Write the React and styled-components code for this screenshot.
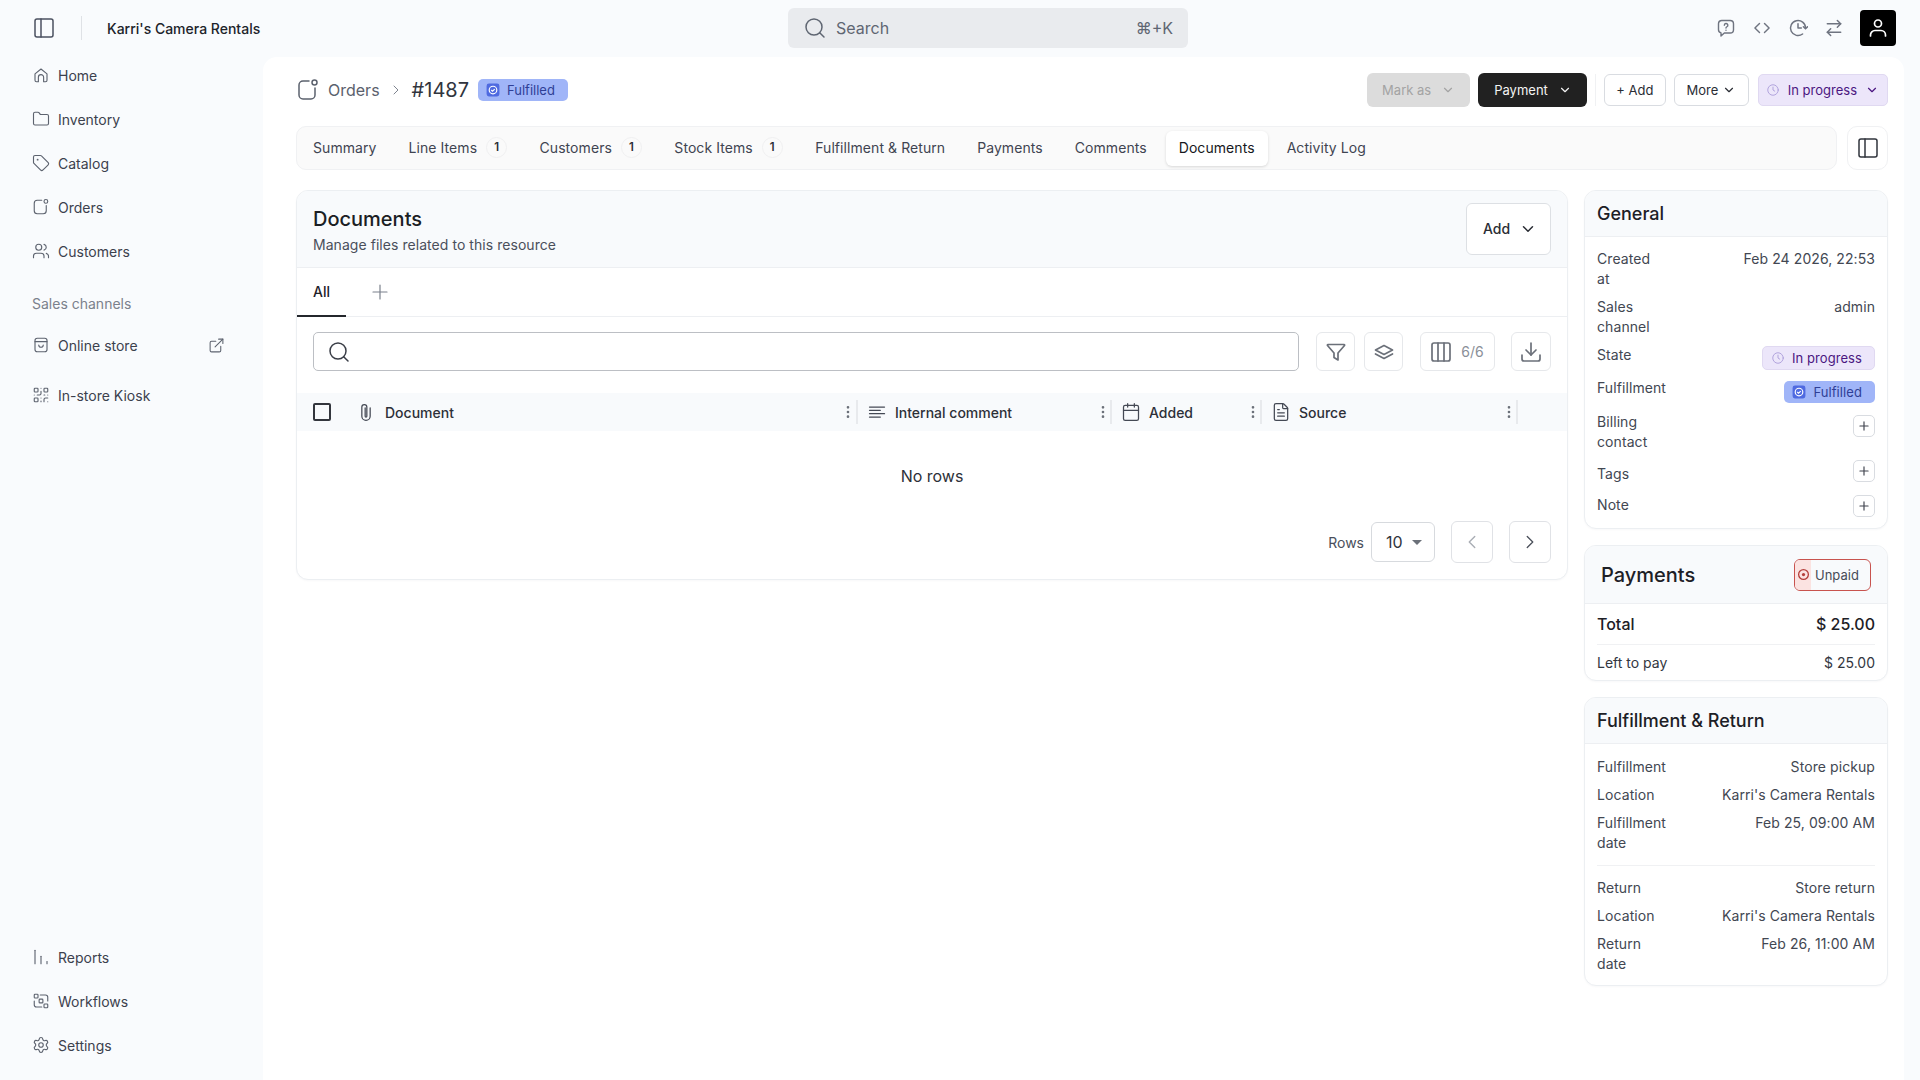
import React from "react";
import styled, { createGlobalStyle } from "styled-components";
import {
  ArrowRightLeft,
  Calendar,
  ChevronDown,
  ChevronLeft,
  ChevronRight,
  Columns3,
  Download,
  EllipsisVertical,
  ExternalLink,
  FileText,
  Folder,
  PanelLeft,
  Plus,
  QrCode,
  Search,
  Settings,
  Tag,
  Users,
} from "lucide-react";

const GlobalStyle = createGlobalStyle`
  html, body {
    margin: 0;
    height: 100%;
    background: #f9fbfd;
  }
  body {
    font-family: Inter, "Liberation Sans", sans-serif;
    color: #1d2026;
    overflow: hidden;
  }
  * {
    box-sizing: border-box;
  }
`;

const Svg = ({ size = 16, children, color = "currentColor", sw = 1.5 }) => (
  <svg
    width={size}
    height={size}
    viewBox="0 0 24 24"
    fill="none"
    stroke={color}
    strokeWidth={sw}
    strokeLinecap="round"
    strokeLinejoin="round"
  >
    {children}
  </svg>
);

const HomeIcon = ({ size }) => (
  <Svg size={size}>
    <path d="M4 10.5L12 4l8 6.5V19a2 2 0 0 1-2 2h-2.5v-6a3.5 3.5 0 0 0-7 0v6H6a2 2 0 0 1-2-2z" />
  </Svg>
);

const OrdersIcon = ({ size }) => (
  <Svg size={size}>
    <path d="M13 3H7a4 4 0 0 0-4 4v10a4 4 0 0 0 4 4h8a4 4 0 0 0 4-4V10" />
    <circle cx="18.5" cy="4.5" r="2.5" />
  </Svg>
);

const StoreIcon = ({ size }) => (
  <Svg size={size}>
    <rect x="4" y="3" width="16" height="18" rx="3" />
    <path d="M4 7.5h16" />
    <path d="M9 12a3 3 0 0 0 6 0" />
  </Svg>
);

const ReportsIcon = ({ size }) => (
  <Svg size={size}>
    <path d="M4 3v18" />
    <path d="M12 11v10" />
    <path d="M20 18v3" />
  </Svg>
);

const WorkflowIcon = ({ size }) => (
  <Svg size={size}>
    <rect x="3" y="3" width="5" height="5" rx="1" />
    <rect x="9.5" y="9.5" width="5" height="5" rx="1" />
    <rect x="16" y="16" width="5" height="5" rx="1" />
    <path d="M11 4h7a3 3 0 0 1 3 3v5" />
    <path d="M3 12v5a3 3 0 0 0 3 3h7" />
  </Svg>
);

const HelpIcon = ({ size }) => (
  <Svg size={size} sw={1.7}>
    <path d="M7 3h10a4 4 0 0 1 4 4v7a4 4 0 0 1-4 4h-7l-4 3.5V17.8A4 4 0 0 1 3 14V7a4 4 0 0 1 4-4z" />
    <path d="M10 8.6a2.1 2.1 0 1 1 3.1 1.9c-.7.4-1.1.8-1.1 1.4" />
    <path d="M12 14.6h.01" />
  </Svg>
);

const CodeIcon = ({ size }) => (
  <Svg size={size} sw={1.7}>
    <path d="M9 6.5L3.5 12 9 17.5" />
    <path d="M15 6.5l5.5 5.5-5.5 5.5" />
  </Svg>
);

const HistoryIcon = ({ size }) => (
  <Svg size={size} sw={1.8}>
    <path d="M17.5 19.2A9 9 0 1 1 21 12" />
    <path d="M12 7v5h4" />
    <path d="M18.5 10.5l2.5 2.5 2.5-2.5" />
  </Svg>
);

const UserIcon = ({ size }) => (
  <Svg size={size} sw={1.7}>
    <circle cx="12" cy="7.5" r="3.5" />
    <path d="M4.5 20v-1a4.5 4.5 0 0 1 4.5-4.5h6a4.5 4.5 0 0 1 4.5 4.5v1" />
  </Svg>
);

const FunnelIcon = ({ size }) => (
  <Svg size={size} sw={1.7}>
    <path d="M4 4.5h16a.6.6 0 0 1 .5 1L14 13v7l-4-2.5V13L3.5 5.5a.6.6 0 0 1 .5-1z" />
  </Svg>
);

const LayersIcon = ({ size }) => (
  <Svg size={size} sw={1.7}>
    <path d="M12 5.5l8.5 4.5-8.5 4.5L3.5 10z" />
    <path d="M3.5 14l8.5 4.5 8.5-4.5" />
  </Svg>
);

const ClipIcon = ({ size }) => (
  <Svg size={size}>
    <path d="M17 7v10a5 5 0 0 1-10 0V6a3 3 0 0 1 6 0v11a1 1 0 0 1-2 0V7" />
  </Svg>
);

const LinesIcon = ({ size }) => (
  <Svg size={size}>
    <path d="M3 6h18" />
    <path d="M3 10h13" />
    <path d="M3 14h18" />
    <path d="M3 18h13" />
  </Svg>
);

const ClockIcon = ({ size }) => (
  <Svg size={size} color="#a99ad8">
    <circle cx="12" cy="12" r="9" />
    <path d="M12 7v5l3 2" />
  </Svg>
);

const FulfilledIcon = () => (
  <svg width="14" height="14" viewBox="0 0 24 24" fill="none">
    <rect x="1" y="1" width="22" height="22" rx="4" fill="#4f6ae0" />
    <circle cx="12" cy="12" r="6.5" stroke="#fff" strokeWidth="2" />
    <path d="M9 12l2.2 2.2L15 10.5" stroke="#fff" strokeWidth="2" />
  </svg>
);

const UnpaidIcon = () => (
  <svg width="13" height="13" viewBox="0 0 24 24" fill="none">
    <circle cx="12" cy="12" r="9" stroke="#b5403c" strokeWidth="2.4" />
    <circle cx="12" cy="12" r="3" fill="#b5403c" />
  </svg>
);

const Page = styled.div`
  width: 1920px;
  height: 1080px;
  display: flex;
  flex-direction: column;
`;

const TopBar = styled.header`
  height: 57px;
  flex: none;
  display: flex;
  align-items: center;
  padding-bottom: 1px;
`;

const TopLeft = styled.div`
  width: 788px;
  display: flex;
  align-items: center;
  padding-left: 32px;
  color: #4b5160;
`;

const TopDivider = styled.span`
  width: 1px;
  height: 24px;
  background: #dfe2e6;
  margin: 0 25px;
`;

const ShopName = styled.span`
  font-size: 14px;
  font-weight: 500;
  color: #20232a;
`;

const SearchBox = styled.div`
  width: 400px;
  height: 40px;
  border-radius: 6px;
  background: #e9ebee;
  display: flex;
  align-items: center;
  gap: 9px;
  padding: 0 15px;
  color: #5f6672;
  font-size: 16px;
`;

const Shortcut = styled.span`
  margin-left: auto;
  font-size: 16px;
`;

const TopRight = styled.div`
  flex: 1;
  display: flex;
  align-items: center;
  justify-content: flex-end;
  padding-right: 24px;
  color: #6f7480;
`;

const TopIcon = styled.span`
  width: 36px;
  display: flex;
  justify-content: center;
`;

const Avatar = styled.div`
  width: 36px;
  height: 36px;
  margin-left: 8px;
  border-radius: 4px;
  background: #000;
  color: #fff;
  display: flex;
  align-items: center;
  justify-content: center;
`;

const Body = styled.div`
  flex: 1;
  display: flex;
  min-height: 0;
`;

const Sidebar = styled.nav`
  width: 263px;
  flex: none;
  display: flex;
  flex-direction: column;
  justify-content: space-between;
  margin-top: -1px;
  padding-bottom: 16px;
`;

const NavGroup = styled.div`
  display: flex;
  flex-direction: column;
  gap: 6px;
`;

const NavItem = styled.a`
  height: 38px;
  display: flex;
  align-items: center;
  gap: 8px;
  padding-left: 32px;
  font-size: 14px;
  font-weight: 400;
  color: #3c414d;
  margin-top: ${(props) => props.$top || 0}px;
  svg {
    color: #5d636f;
    flex: none;
  }
`;

const NavOut = styled.span`
  margin-left: auto;
  margin-right: 38px;
  display: flex;
`;

const NavLabel = styled.div`
  margin: 18px 0 6px 32px;
  height: 20px;
  line-height: 20px;
  font-size: 14px;
  color: #7b818c;
`;

const Main = styled.main`
  flex: 1;
  min-width: 0;
  margin-right: 16px;
  padding: 16px 16px 0 33px;
  background: #fff;
  border-radius: 14px 14px 0 0;
`;

const ActionRow = styled.div`
  height: 34px;
  display: flex;
  align-items: center;
  justify-content: space-between;
`;

const Crumbs = styled.div`
  display: flex;
  align-items: center;
  color: #5b616d;
`;

const CrumbLink = styled.span`
  margin-left: 8px;
  font-size: 16px;
  color: #5b616d;
`;

const CrumbArrow = styled.span`
  display: flex;
  margin: 0 8px;
  color: #7e848f;
`;

const OrderNo = styled.span`
  font-size: 20px;
  color: #31353e;
  margin-right: 9px;
`;

const Pill = styled.span`
  height: ${(props) => props.$h || 22}px;
  display: inline-flex;
  align-items: center;
  gap: ${(props) => props.$gap || 7}px;
  padding: 0 ${(props) => props.$pr || 13}px 0 ${(props) => props.$pl || 8}px;
  border-radius: 5px;
  font-size: 13px;
  font-weight: 400;
  white-space: nowrap;
`;

const FulfilledPill = styled(Pill)`
  background: #a0b5f8;
  color: #2f3f96;
`;

const ProgressPill = styled(Pill)`
  background: #ece6fa;
  border: 1px solid #e0d9f1;
  color: #4b1681;
`;

const HeaderProgress = styled(ProgressPill)`
  margin-left: 1px;
`;

const Actions = styled.div`
  display: flex;
  align-items: center;
  gap: 8px;
`;

const ActionDivider = styled.span`
  width: 1px;
  height: 32px;
  background: #f0f1f3;
`;

const Btn = styled.button`
  height: 32px;
  padding: 0 11.5px;
  display: inline-flex;
  align-items: center;
  gap: 4px;
  border: 1px solid #d9dce1;
  border-radius: 6px;
  background: #fff;
  color: #2a2d34;
  font-family: inherit;
  font-size: 13px;
`;

const DarkBtn = styled(Btn)`
  height: 34px;
  padding: 0 15px 0 16px;
  gap: 10px;
  border: 0;
  background: #212121;
  color: #f3f3f3;
`;

const MutedBtn = styled(DarkBtn)`
  background: #dcdcdc;
  color: #a3a3a3;
  padding: 0 15px;
`;

const TabRow = styled.div`
  display: flex;
  gap: 10px;
  margin: 19px 0 20px;
`;

const TabBar = styled.div`
  flex: 1;
  height: 44px;
  display: flex;
  align-items: center;
  gap: 6px;
  border: 1px solid #f0f1f3;
  border-radius: 10px;
  background: #fafafa;
  padding: 0 4px 0 3px;
`;

const TabItem = styled.div`
  height: 35px;
  display: flex;
  align-items: center;
  padding: 0 13px 1px;
  border-radius: 6px;
  font-size: 14px;
  letter-spacing: 0.07px;
  color: ${(props) => (props.$active ? "#16181d" : "#3f4451")};
  background: ${(props) => (props.$active ? "#fff" : "transparent")};
  box-shadow: ${(props) => (props.$active ? "0 1px 3px rgba(0,0,0,.14)" : "none")};
`;

const CountTab = styled(TabItem)`
  gap: 9px;
  padding-right: 13.4px;
  padding-bottom: 2px;
`;

const CountBadge = styled.span`
  width: 21px;
  height: 21px;
  border: 1px solid #f0f0f1;
  border-radius: 50%;
  display: flex;
  align-items: center;
  justify-content: center;
  font-size: 11.5px;
  font-weight: 600;
  color: #2b2e35;
`;

const PanelToggle = styled.div`
  width: 41px;
  height: 44px;
  border: 1px solid #f0f1f3;
  border-radius: 10px;
  display: flex;
  align-items: center;
  justify-content: center;
  color: #30343c;
`;

const Content = styled.div`
  display: grid;
  grid-template-columns: 1272px 304px;
  gap: 16px;
  align-items: start;
`;

const Card = styled.section`
  border: 1px solid #eceff2;
  border-radius: 12px;
  background: #fff;
  overflow: hidden;
  box-shadow: 0 1px 2px rgba(20, 30, 50, 0.03);
`;

const DocCard = styled(Card)`
  height: 390px;
`;

const DocHead = styled.div`
  height: 77px;
  display: flex;
  align-items: center;
  justify-content: space-between;
  padding: 0 16px;
  background: #f8fafc;
  border-bottom: 1px solid #edeff2;
`;

const DocTitle = styled.h2`
  margin: 1px 0 2px;
  font-size: 20px;
  line-height: 28px;
  font-weight: 500;
  color: #1b1e24;
`;

const DocSub = styled.p`
  margin: 0;
  font-size: 14px;
  line-height: 20px;
  letter-spacing: 0.05px;
  color: #4a4f5b;
`;

const AddBtn = styled(Btn)`
  height: 52px;
  width: 85px;
  margin-bottom: 1px;
  padding: 0 13px 0 16px;
  justify-content: space-between;
  font-size: 14px;
  font-weight: 500;
  background: #fff;
  border-color: #dde0e4;
`;

const ViewTabs = styled.div`
  height: 49px;
  display: flex;
  align-items: center;
  border-bottom: 1px solid #edeff2;
  color: #7a808b;
`;

const ViewTab = styled.div`
  width: 49px;
  height: 49px;
  margin-right: 22px;
  display: flex;
  align-items: center;
  padding-left: 16px;
  font-size: 14px;
  font-weight: 500;
  color: #1f2228;
  border-bottom: 2px solid #24272c;
`;

const Toolbar = styled.div`
  height: 39px;
  margin: 15px 16px 22px;
  display: flex;
  align-items: stretch;
  gap: 9px;
`;

const TableSearch = styled.div`
  flex: 1;
  margin-right: 8px;
  display: flex;
  align-items: center;
  padding-left: 13px;
  border: 1px solid #bcbfc4;
  border-radius: 5px;
  color: #3a3e47;
`;

const ToolBtn = styled.div`
  width: ${(props) => props.$w || 39}px;
  margin-left: ${(props) => props.$ml || 0}px;
  padding-right: ${(props) => props.$pr || 0}px;
  display: flex;
  align-items: center;
  justify-content: center;
  gap: 8px;
  border: 1px solid #e6e8eb;
  border-radius: 6px;
  color: #6b7079;
  font-size: 14px;
`;

const ToolCount = styled.span`
  color: #8a8f98;
`;

const TableHead = styled.div`
  height: 38px;
  display: grid;
  grid-template-columns: 48px 513px 254px 150px 256px 1fr;
  align-items: center;
  background: #f8fafc;
  font-size: 14px;
  font-weight: 500;
  color: #2d3038;
`;

const CheckCell = styled.div`
  padding-left: 16px;
  display: flex;
`;

const Checkbox = styled.span`
  width: 18px;
  height: 18px;
  border: 2px solid #33363d;
  border-radius: 2px;
`;

const HeadCell = styled.div`
  height: 24px;
  display: flex;
  align-items: center;
  gap: ${(props) => props.$gap || 8}px;
  padding-left: ${(props) => props.$pl || 9}px;
  svg {
    flex: none;
    color: #444954;
  }
`;

const HeadMenu = styled.span`
  margin-left: auto;
  width: 16px;
  display: flex;
  justify-content: center;
  svg {
    color: #6b7079;
  }
`;

const ColDivider = styled.span`
  width: 2px;
  height: 24px;
  margin-left: -9px;
  background: #e8eaed;
`;

const EmptyRow = styled.div`
  height: 90px;
  display: flex;
  align-items: center;
  justify-content: center;
  font-size: 16px;
  color: #2d3038;
`;

const Pager = styled.div`
  display: flex;
  align-items: center;
  justify-content: flex-end;
  padding-right: 16px;
  font-size: 14px;
  color: #4a4f5b;
`;

const RowSelect = styled.div`
  width: 64px;
  height: 40px;
  margin: 0 16px 0 7px;
  padding-left: 14px;
  display: flex;
  align-items: center;
  gap: 9px;
  border: 1px solid #d7dade;
  border-radius: 6px;
  font-size: 16px;
  color: #30343c;
`;

const Caret = styled.span`
  width: 0;
  height: 0;
  border-left: 5px solid transparent;
  border-right: 5px solid transparent;
  border-top: 5px solid #6b7079;
`;

const PageBtn = styled.div`
  width: 42px;
  height: 42px;
  margin-left: ${(props) => props.$ml || 0}px;
  display: flex;
  align-items: center;
  justify-content: center;
  border: 1px solid #e0e2e6;
  border-radius: 6px;
  color: ${(props) => (props.$off ? "#a9adb4" : "#50555f")};
`;

const SideColumn = styled.aside`
  display: flex;
  flex-direction: column;
  gap: 16px;
`;

const SideHead = styled.div`
  height: 46px;
  display: flex;
  align-items: center;
  justify-content: space-between;
  padding: 0 12px;
  background: #f8fafc;
  border-bottom: 1px solid #edeff2;
  font-size: 18px;
  font-weight: 500;
  color: #1d2026;
`;

const PayHead = styled(SideHead)`
  height: 58px;
  padding: 0 16px;
  font-size: 20px;
`;

const SideBody = styled.div`
  padding: 12px 12px 11px;
`;

const FulfilmentBody = styled(SideBody)`
  padding-top: 13px;
`;

const DetailRow = styled.div`
  display: flex;
  justify-content: space-between;
  align-items: flex-start;
  margin-bottom: ${(props) => props.$mb ?? 8}px;
  font-size: 14px;
  line-height: 20px;
  letter-spacing: 0.08px;
  color: #424752;
  &:last-child {
    margin-bottom: 0;
  }
`;

const Label = styled.span`
  width: min-content;
  margin-top: ${(props) => props.$top || 0}px;
`;

const GeneralPill = styled.span`
  margin-top: ${(props) => props.$top || 0}px;
  display: flex;
`;

const MiniPlus = styled.span`
  width: 22px;
  height: 22px;
  margin-top: ${(props) => props.$top || 0}px;
  display: flex;
  align-items: center;
  justify-content: center;
  border: 1px solid #d9dce1;
  border-radius: 5px;
  color: #40444e;
`;

const UnpaidBadge = styled.span`
  width: 77px;
  height: 32px;
  display: flex;
  align-items: center;
  border: 1px solid #c8534e;
  border-radius: 6px;
  overflow: hidden;
  font-size: 13px;
  font-weight: 400;
  color: #474c57;
`;

const UnpaidMark = styled.span`
  width: 16px;
  align-self: stretch;
  flex: none;
  display: flex;
  align-items: center;
  justify-content: center;
  background: #fbe3e1;
  margin-right: 4px;
`;

const TotalRow = styled.div`
  height: 41px;
  margin: 0 12px;
  display: flex;
  align-items: center;
  justify-content: space-between;
  border-bottom: 1px solid #f0f1f3;
  font-size: 16px;
  font-weight: 500;
  color: #1d2026;
`;

const LeftRow = styled(TotalRow)`
  height: 35px;
  border: 0;
  font-size: 14px;
  font-weight: 400;
  color: #33373f;
`;

const Rule = styled.div`
  height: 1px;
  background: #f0f1f3;
  margin: 12px 0;
`;

const tabs = [
  ["Summary"],
  ["Line Items", 1],
  ["Customers", 1],
  ["Stock Items", 1],
  ["Fulfillment & Return"],
  ["Payments"],
  ["Comments"],
  ["Documents"],
  ["Activity Log"],
];

const fulfilment = [
  ["Fulfillment", "Store pickup"],
  ["Location", "Karri's Camera Rentals"],
  ["Fulfillment date", "Feb 25, 09:00 AM"],
];

const returns = [
  ["Return", "Store return"],
  ["Location", "Karri's Camera Rentals"],
  ["Return date", "Feb 26, 11:00 AM"],
];

export default function App() {
  return (
    <Page>
      <GlobalStyle />
      <TopBar>
        <TopLeft>
          <PanelLeft size={24} strokeWidth={1.5} />
          <TopDivider />
          <ShopName>Karri's Camera Rentals</ShopName>
        </TopLeft>
        <SearchBox>
          <Search size={24} strokeWidth={1.5} />
          Search
          <Shortcut>⌘+K</Shortcut>
        </SearchBox>
        <TopRight>
          <TopIcon>
            <HelpIcon size={20} />
          </TopIcon>
          <TopIcon>
            <CodeIcon size={20} />
          </TopIcon>
          <TopIcon>
            <HistoryIcon size={20} />
          </TopIcon>
          <TopIcon>
            <ArrowRightLeft size={20} strokeWidth={1.8} />
          </TopIcon>
          <Avatar>
            <UserIcon size={24} />
          </Avatar>
        </TopRight>
      </TopBar>

      <Body>
        <Sidebar>
          <NavGroup>
            <NavItem>
              <HomeIcon size={18} />
              Home
            </NavItem>
            <NavItem>
              <Folder size={18} strokeWidth={1.5} />
              Inventory
            </NavItem>
            <NavItem>
              <Tag size={18} strokeWidth={1.5} />
              Catalog
            </NavItem>
            <NavItem>
              <OrdersIcon size={18} />
              Orders
            </NavItem>
            <NavItem>
              <Users size={18} strokeWidth={1.5} />
              Customers
            </NavItem>
            <NavLabel>Sales channels</NavLabel>
            <NavItem>
              <StoreIcon size={18} />
              Online store
              <NavOut>
                <ExternalLink size={17} strokeWidth={1.5} />
              </NavOut>
            </NavItem>
            <NavItem $top={6}>
              <QrCode size={18} strokeWidth={1.5} />
              In-store Kiosk
            </NavItem>
          </NavGroup>
          <NavGroup>
            <NavItem>
              <ReportsIcon size={18} />
              Reports
            </NavItem>
            <NavItem>
              <WorkflowIcon size={18} />
              Workflows
            </NavItem>
            <NavItem>
              <Settings size={18} strokeWidth={1.5} />
              Settings
            </NavItem>
          </NavGroup>
        </Sidebar>

        <Main>
          <ActionRow>
            <Crumbs>
              <OrdersIcon size={24} />
              <CrumbLink>Orders</CrumbLink>
              <CrumbArrow>
                <ChevronRight size={16} strokeWidth={1.5} />
              </CrumbArrow>
              <OrderNo>#1487</OrderNo>
              <FulfilledPill>
                <FulfilledIcon />
                Fulfilled
              </FulfilledPill>
            </Crumbs>
            <Actions>
              <MutedBtn>
                Mark as
                <ChevronDown size={14} />
              </MutedBtn>
              <DarkBtn>
                Payment
                <ChevronDown size={14} />
              </DarkBtn>
              <ActionDivider />
              <Btn>+ Add</Btn>
              <Btn>
                More
                <ChevronDown size={14} />
              </Btn>
              <HeaderProgress $h={32} $gap={8} $pl={7} $pr={8}>
                <ClockIcon size={14} />
                In progress
                <ChevronDown size={14} />
              </HeaderProgress>
            </Actions>
          </ActionRow>

          <TabRow>
            <TabBar>
              {tabs.map(([name, count]) =>
                count ? (
                  <CountTab key={name}>
                    {name}
                    <CountBadge>{count}</CountBadge>
                  </CountTab>
                ) : (
                  <TabItem key={name} $active={name === "Documents"}>
                    {name}
                  </TabItem>
                )
              )}
            </TabBar>
            <PanelToggle>
              <PanelLeft size={24} strokeWidth={1.5} />
            </PanelToggle>
          </TabRow>

          <Content>
            <DocCard>
              <DocHead>
                <div>
                  <DocTitle>Documents</DocTitle>
                  <DocSub>Manage files related to this resource</DocSub>
                </div>
                <AddBtn>
                  Add
                  <ChevronDown size={18} />
                </AddBtn>
              </DocHead>
              <ViewTabs>
                <ViewTab>All</ViewTab>
                <Plus size={24} strokeWidth={1.2} />
              </ViewTabs>
              <Toolbar>
                <TableSearch>
                  <Search size={24} strokeWidth={1.5} />
                </TableSearch>
                <ToolBtn>
                  <FunnelIcon size={24} />
                </ToolBtn>
                <ToolBtn>
                  <LayersIcon size={24} />
                </ToolBtn>
                <ToolBtn $w={75} $ml={8} $pr={2}>
                  <Columns3 size={24} strokeWidth={1.7} />
                  <ToolCount>6/6</ToolCount>
                </ToolBtn>
                <ToolBtn $w={40} $ml={7}>
                  <Download size={24} strokeWidth={1.7} />
                </ToolBtn>
              </Toolbar>
              <TableHead>
                <CheckCell>
                  <Checkbox />
                </CheckCell>
                <HeadCell $pl={11} $gap={9}>
                  <ClipIcon size={20} />
                  <span>Document</span>
                  <HeadMenu>
                    <EllipsisVertical size={16} />
                  </HeadMenu>
                  <ColDivider />
                </HeadCell>
                <HeadCell>
                  <LinesIcon size={20} />
                  <span>Internal comment</span>
                  <HeadMenu>
                    <EllipsisVertical size={16} />
                  </HeadMenu>
                  <ColDivider />
                </HeadCell>
                <HeadCell>
                  <Calendar size={20} strokeWidth={1.5} />
                  <span>Added</span>
                  <HeadMenu>
                    <EllipsisVertical size={16} />
                  </HeadMenu>
                  <ColDivider />
                </HeadCell>
                <HeadCell>
                  <FileText size={20} strokeWidth={1.5} />
                  <span>Source</span>
                  <HeadMenu>
                    <EllipsisVertical size={16} />
                  </HeadMenu>
                  <ColDivider />
                </HeadCell>
              </TableHead>
              <EmptyRow>No rows</EmptyRow>
              <Pager>
                Rows
                <RowSelect>
                  10
                  <Caret />
                </RowSelect>
                <PageBtn $off>
                  <ChevronLeft size={22} strokeWidth={1.5} />
                </PageBtn>
                <PageBtn $ml={16}>
                  <ChevronRight size={22} strokeWidth={1.5} />
                </PageBtn>
              </Pager>
            </DocCard>

            <SideColumn>
              <Card>
                <SideHead>General</SideHead>
                <SideBody>
                  <DetailRow>
                    <Label>Created at</Label>
                    <span>Feb 24 2026, 22:53</span>
                  </DetailRow>
                  <DetailRow>
                    <Label>Sales channel</Label>
                    <span>admin</span>
                  </DetailRow>
                  <DetailRow>
                    <Label>State</Label>
                    <GeneralPill $top={1}>
                      <ProgressPill $h={24} $gap={7} $pr={12}>
                        <ClockIcon size={14} />
                        In progress
                      </ProgressPill>
                    </GeneralPill>
                  </DetailRow>
                  <DetailRow $mb={9}>
                    <Label>Fulfillment</Label>
                    <GeneralPill $top={3}>
                      <FulfilledPill>
                        <FulfilledIcon />
                        Fulfilled
                      </FulfilledPill>
                    </GeneralPill>
                  </DetailRow>
                  <DetailRow>
                    <Label>Billing contact</Label>
                    <MiniPlus $top={3}>
                      <Plus size={14} />
                    </MiniPlus>
                  </DetailRow>
                  <DetailRow $mb={11}>
                    <Label $top={4}>Tags</Label>
                    <MiniPlus>
                      <Plus size={14} />
                    </MiniPlus>
                  </DetailRow>
                  <DetailRow>
                    <Label>Note</Label>
                    <MiniPlus>
                      <Plus size={14} />
                    </MiniPlus>
                  </DetailRow>
                </SideBody>
              </Card>

              <Card>
                <PayHead>
                  Payments
                  <UnpaidBadge>
                    <UnpaidMark>
                      <UnpaidIcon />
                    </UnpaidMark>
                    Unpaid
                  </UnpaidBadge>
                </PayHead>
                <TotalRow>
                  <span>Total</span>
                  <span>$ 25.00</span>
                </TotalRow>
                <LeftRow>
                  <span>Left to pay</span>
                  <span>$ 25.00</span>
                </LeftRow>
              </Card>

              <Card>
                <SideHead>Fulfillment &amp; Return</SideHead>
                <FulfilmentBody>
                  {fulfilment.map(([label, value]) => (
                    <DetailRow key={label}>
                      <Label>{label}</Label>
                      <span>{value}</span>
                    </DetailRow>
                  ))}
                  <Rule />
                  {returns.map(([label, value]) => (
                    <DetailRow key={label}>
                      <Label>{label}</Label>
                      <span>{value}</span>
                    </DetailRow>
                  ))}
                </FulfilmentBody>
              </Card>
            </SideColumn>
          </Content>
        </Main>
      </Body>
    </Page>
  );
}
